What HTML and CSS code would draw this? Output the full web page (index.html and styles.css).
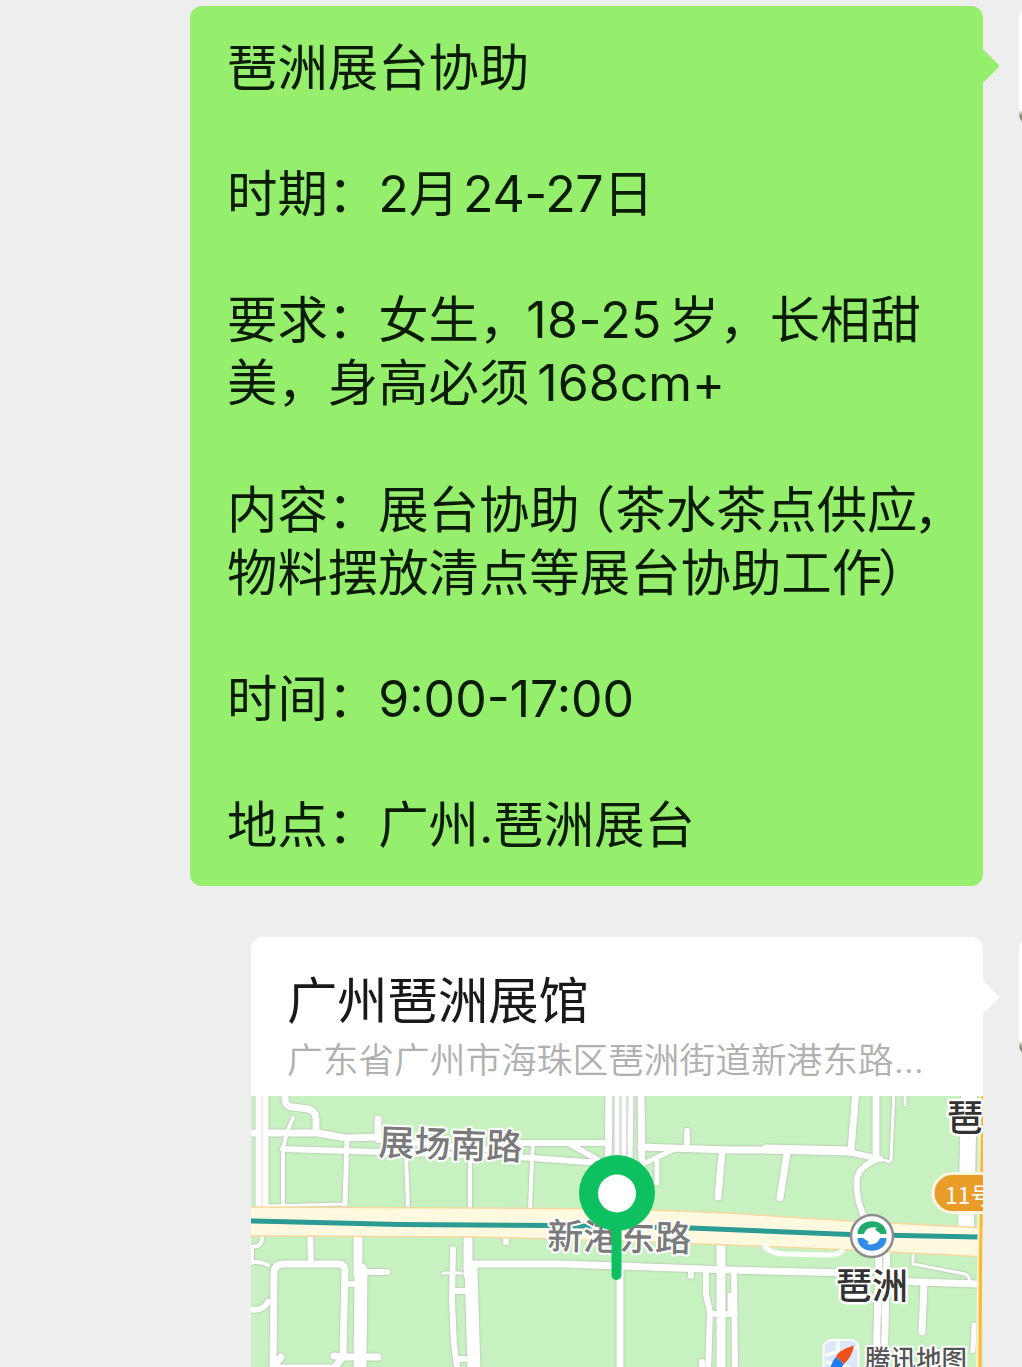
FILE: index.html
```html
<!DOCTYPE html>
<html lang="zh-CN">
<head>
  <meta charset="UTF-8" />
  <meta name="viewport" content="width=device-width, initial-scale=1.0" />
  <title>聊天</title>
  <link rel="stylesheet" href="styles.css">
</head>
<body>
  <div class="chat">
    <div class="row">
      <div class="bubble">
        <p>琶洲展台协助</p>
        <p>时期：<span class="num">2</span>月<span class="num date">24-27</span>日</p>
        <p>要求：女生，<span class="num age">18-25</span>岁，长相甜<br>美，身高必须<span class="num height">168cm+</span></p>
        <p>内容：展台协助<span class="paren">（</span>茶水茶点供应<span class="tight">，</span><br>物料摆放清点等展台协助工作<span class="tight">）</span></p>
        <p>时间：<span class="num">9:00-17:00</span></p>
        <p>地点：广州<span class="num">.</span>琶洲展台</p>
      </div>
      <div class="avatar"></div>
    </div>

    <div class="row">
      <div class="card">
        <div class="card-head">
          <h2>广州琶洲展馆</h2>
          <div class="address">广东省广州市海珠区琶洲街道新港东路<span>...</span></div>
        </div>
        <svg class="map" viewBox="251 1096 732 271" width="732" height="271">
          <rect class="land" x="251" y="1096" width="732" height="271"/>

          <!-- small streets -->
          <g class="roads">
            <path class="w13" d="M262 1090V1210"/>
            <path class="w7" d="M248 1133H318L346 1138L378 1137V1119M285 1090V1100Q286 1107 293 1107L308 1109Q316 1111 316 1119V1133"/>
            <path class="w4" d="M293 1118L287 1132L283 1148V1207M406 1153L408 1210M470 1155V1210M533 1144L532 1160L530 1210"/>
            <path class="w6" d="M283 1149L380 1152"/>
            <path class="w5" d="M347 1138L345 1204"/>
            <path class="w3" d="M264 1206L346 1204"/>
            <path class="w6" d="M378 1140L520 1152M380 1152L520 1157M515 1143H607M518 1157L600 1163M570 1144L603 1163"/>
            <path class="w7" d="M609 1090L608 1170M641 1090L642 1170M641 1147L730 1150L770 1150"/>
            <path class="w6" d="M687 1131V1147"/>
            <path class="w5" d="M617 1090V1165M624 1090V1165M631 1090L630 1165M645 1163L675 1149M657 1158V1183"/>
            <path class="w7" d="M722 1152L718 1197M787 1153L780 1198M856 1090L851 1150M876 1090V1158"/>
            <path class="w9" d="M766 1149L850 1151"/>
            <path class="w6" d="M848 1152L880 1159M877 1159C858 1168 855 1175 857 1190Q858 1203 864 1217"/>
            <path class="w3" d="M894 1090L891 1159Q891 1163 887 1161L877 1158M905 1090V1105"/>
            <path class="w16" d="M969 1090L966 1230"/>

            <path class="w4" d="M262 1232V1240Q261 1247 251 1247M248 1262Q260 1261 268 1265M252 1247V1263"/>
            <path class="w6" d="M310 1232L311 1264M248 1309Q263 1312 268 1302M345 1284H360M362 1272H387"/>
            <path class="w5" d="M280 1367H335"/>
            <path class="w7" d="M273 1372L274 1272Q275 1264 284 1264H338Q345 1264 345 1271L343 1357L334 1368M274 1366L281 1357M334 1356L345 1357L378 1357"/>
            <path class="w9" d="M358 1232V1275M468 1232V1275"/>
            <path class="w13" d="M361 1270L360 1372M471 1267L474 1372"/>
            <path class="w6" d="M453 1249L452 1300L454 1345L458 1372M453 1291H470M457 1359H472"/>
            <path class="w3" d="M443 1273H462"/>
            <path class="w7" d="M470 1264H560L620 1266L730 1270L850 1273M890 1281L978 1284M620 1265V1372"/>
            <path class="w6" d="M506 1235V1242M691 1271V1276"/>
            <path class="w6" d="M706 1270V1295L710 1312L708 1372M710 1314H735M734 1270L735 1372M702 1362V1372"/>
            <path class="w9" d="M721 1240V1372"/>
            <path class="w5" d="M730 1295V1314M974 1325L973 1351"/>
            <path class="w7" d="M879 1250L876 1372M887 1250L884 1372"/>
            <path class="w3" d="M913 1250V1264L965 1274Q970 1276 970 1284"/>
            <path class="w7" d="M924 1283L922 1332"/>
          </g>
          <path class="lanes" d="M262 1096V1207M613 1096V1160M620.500 1096V1160M627.500 1096V1160M635 1096V1160M883 1252L880 1367"/>

          <!-- main road with the metro line on it -->
          <path class="avenue" d="M245 1207L480 1208L620 1209L730 1213L850 1221L990 1228V1257L850 1250L730 1245L620 1241L480 1237L245 1236Z"/>
          <path class="slip-road" d="M765 1247Q773 1254 785 1254L830 1255Q838 1255 842 1251"/>
          <path class="metro" d="M251 1221L400 1224.5L560 1225.5L690 1228L850 1234.5L978 1237"/>
          <path class="highway-case" d="M982 1096L979 1367"/>
          <path class="highway" d="M983 1096L980.5 1260L980 1367"/>

          <text class="street" x="378" y="1155" transform="rotate(2 378 1155)">展场南路</text>
          <text class="street" x="547" y="1249" transform="rotate(1 547 1249)">新港东路</text>
          <text class="place" x="947" y="1131">琶</text>
          <text class="place" x="836" y="1299">琶洲</text>

          <!-- exit line badge -->
          <rect class="line-badge" x="933" y="1173.500" width="90" height="39" rx="19.500"/>
          <text class="line-no" x="945" y="1204">11号</text>

          <!-- metro station -->
          <circle class="station" cx="872" cy="1236" r="21"/>
          <path class="station-top" d="M857.500 1234C857.500 1217 886.500 1217 886.500 1234L881 1234L875 1229.500L877 1227.500Q866 1226 864 1234Z"/>
          <path class="station-bottom" d="M857.500 1238C857.500 1255 886.500 1255 886.500 1238L880 1238Q877 1246 867 1244L869 1242L863 1238Z"/>

          <!-- location pin -->
          <path class="pin-stem" d="M616.500 1225V1275"/>
          <circle class="pin" cx="617" cy="1193" r="38"/>
          <circle class="pin-hole" cx="617" cy="1193.500" r="19"/>

          <!-- map provider -->
          <rect class="logo" x="823.500" y="1340" width="35" height="35" rx="8"/>
          <path class="logo-grid" d="M826 1355L858 1347M838 1341V1367M826 1362L850 1367"/>
          <path class="logo-red" d="M854 1345.500Q838 1350 836 1357L844 1364Q852 1357 854 1345.500Z"/>
          <path class="logo-blue" d="M836 1357L844 1364Q839 1372 829 1376Q830 1363 836 1357Z"/>
          <text class="provider" x="865" y="1368">腾讯地图</text>
        </svg>
      </div>
      <div class="avatar"></div>
    </div>
  </div>
</body>
</html>
```

FILE: styles.css
```css
* {
  box-sizing: border-box;
  margin: 0;
  padding: 0;
}
body {
  width: 1022px;
  height: 1367px;
  overflow: hidden;
  background: #eeeeee;
  font-family: "Noto Sans CJK SC", sans-serif;
}
.chat {
  display: flex;
  flex-direction: column;
  gap: 51px;
  width: 1056px;
  padding-top: 6px;
}
.row {
  display: flex;
  justify-content: flex-end;
  gap: 36px;
}
.bubble,
.card {
  position: relative;
  border-radius: 12px;
}
.bubble {
  width: 793px;
  height: 880px;
  padding: 27px 0 0 37px;
  background: #95ee6c;
  color: #0b1c04;
  font-size: 50.4px;
  font-weight: 400;
  line-height: 63.1px;
  white-space: nowrap;
}
.bubble p {
  margin-bottom: 63.1px;
}
.bubble::after,
.card::after {
  content: "";
  position: absolute;
  top: 48px;
  right: -12px;
  width: 24px;
  height: 24px;
  border-radius: 3px;
  background: inherit;
  transform: rotate(45deg);
}
.num {
  font-family: Inter, sans-serif;
  font-size: 50px;
  line-height: 0;
}
.date {
  margin-left: 4px;
  letter-spacing: -0.4px;
}
.age {
  margin: 0 7px 0 -3px;
  letter-spacing: 0.4px;
}
.height {
  margin-left: 8px;
}
.paren {
  margin-left: -15px;
}
.tight {
  margin-left: -4px;
}
.avatar {
  width: 37px;
  height: 120px;
  border-radius: 12px;
  background: linear-gradient(#ffffff 104px, #8f8d78 110px);
}

.card {
  width: 732px;
  background: #ffffff;
}
.card-head {
  height: 159px;
  padding: 29px 0 0 36px;
  white-space: nowrap;
}
.card h2 {
  font-size: 50.3px;
  font-weight: 400;
  line-height: 63px;
  color: #191919;
}
.address {
  font-size: 35.7px;
  font-weight: 350;
  line-height: 58px;
  color: #b0b0b0;
}
.address span {
  font-family: Inter, sans-serif;
  line-height: 0;
}

.map {
  display: block;
}
.land {
  fill: #c8f1c1;
}
.roads {
  fill: none;
  stroke: #ffffff;
  stroke-linecap: round;
  stroke-linejoin: round;
  filter: drop-shadow(0 0 0.8px #a9aaa9);
}
.w3 { stroke-width: 3; }
.w4 { stroke-width: 4; }
.w5 { stroke-width: 5; }
.w6 { stroke-width: 6; }
.w7 { stroke-width: 7; }
.w9 { stroke-width: 9; }
.w13 { stroke-width: 13; }
.w16 { stroke-width: 16; }
.lanes {
  fill: none;
  stroke: #dcdedb;
  stroke-width: 1;
}
.avenue {
  fill: #fff9df;
  stroke: #f5d8a0;
  stroke-width: 1.5;
}
.slip-road {
  fill: none;
  stroke: #ffffff;
  stroke-width: 5;
  stroke-linecap: round;
}
.metro {
  fill: none;
  stroke: #2b9b93;
  stroke-width: 5;
}
.highway-case {
  stroke: #ffefc4;
  stroke-width: 6;
}
.highway {
  fill: none;
  stroke: #f3b83c;
  stroke-width: 3;
}
.street,
.place,
.provider {
  paint-order: stroke;
  stroke: #ffffff;
  stroke-linejoin: round;
}
.street {
  font-size: 36px;
  font-weight: 500;
  fill: #7a7a7a;
  stroke-width: 4px;
}
.place {
  font-size: 36px;
  font-weight: 500;
  fill: #333333;
  stroke-width: 5px;
}
.provider {
  font-size: 25.5px;
  font-weight: 500;
  fill: #555555;
  stroke-width: 4px;
}
.line-badge {
  fill: #e99d28;
  stroke: #fff6e2;
  stroke-width: 3;
}
.line-no {
  font-size: 23px;
  fill: #ffffff;
}
.station {
  fill: #ffffff;
  stroke: #8d8b8d;
  stroke-width: 2.5;
}
.station-top {
  fill: #20ad6b;
}
.station-bottom {
  fill: #338be8;
}
.pin {
  fill: #0dc160;
}
.pin-stem {
  stroke: #0dc160;
  stroke-width: 10;
  stroke-linecap: round;
}
.pin-hole {
  fill: #ffffff;
}
.logo {
  fill: #dbe8fa;
  stroke: #ffffff;
  stroke-width: 2;
}
.logo-grid {
  fill: none;
  stroke: #ffffff;
  stroke-width: 3;
}
.logo-red {
  fill: #f0501c;
}
.logo-blue {
  fill: #1f7cf0;
}
```
